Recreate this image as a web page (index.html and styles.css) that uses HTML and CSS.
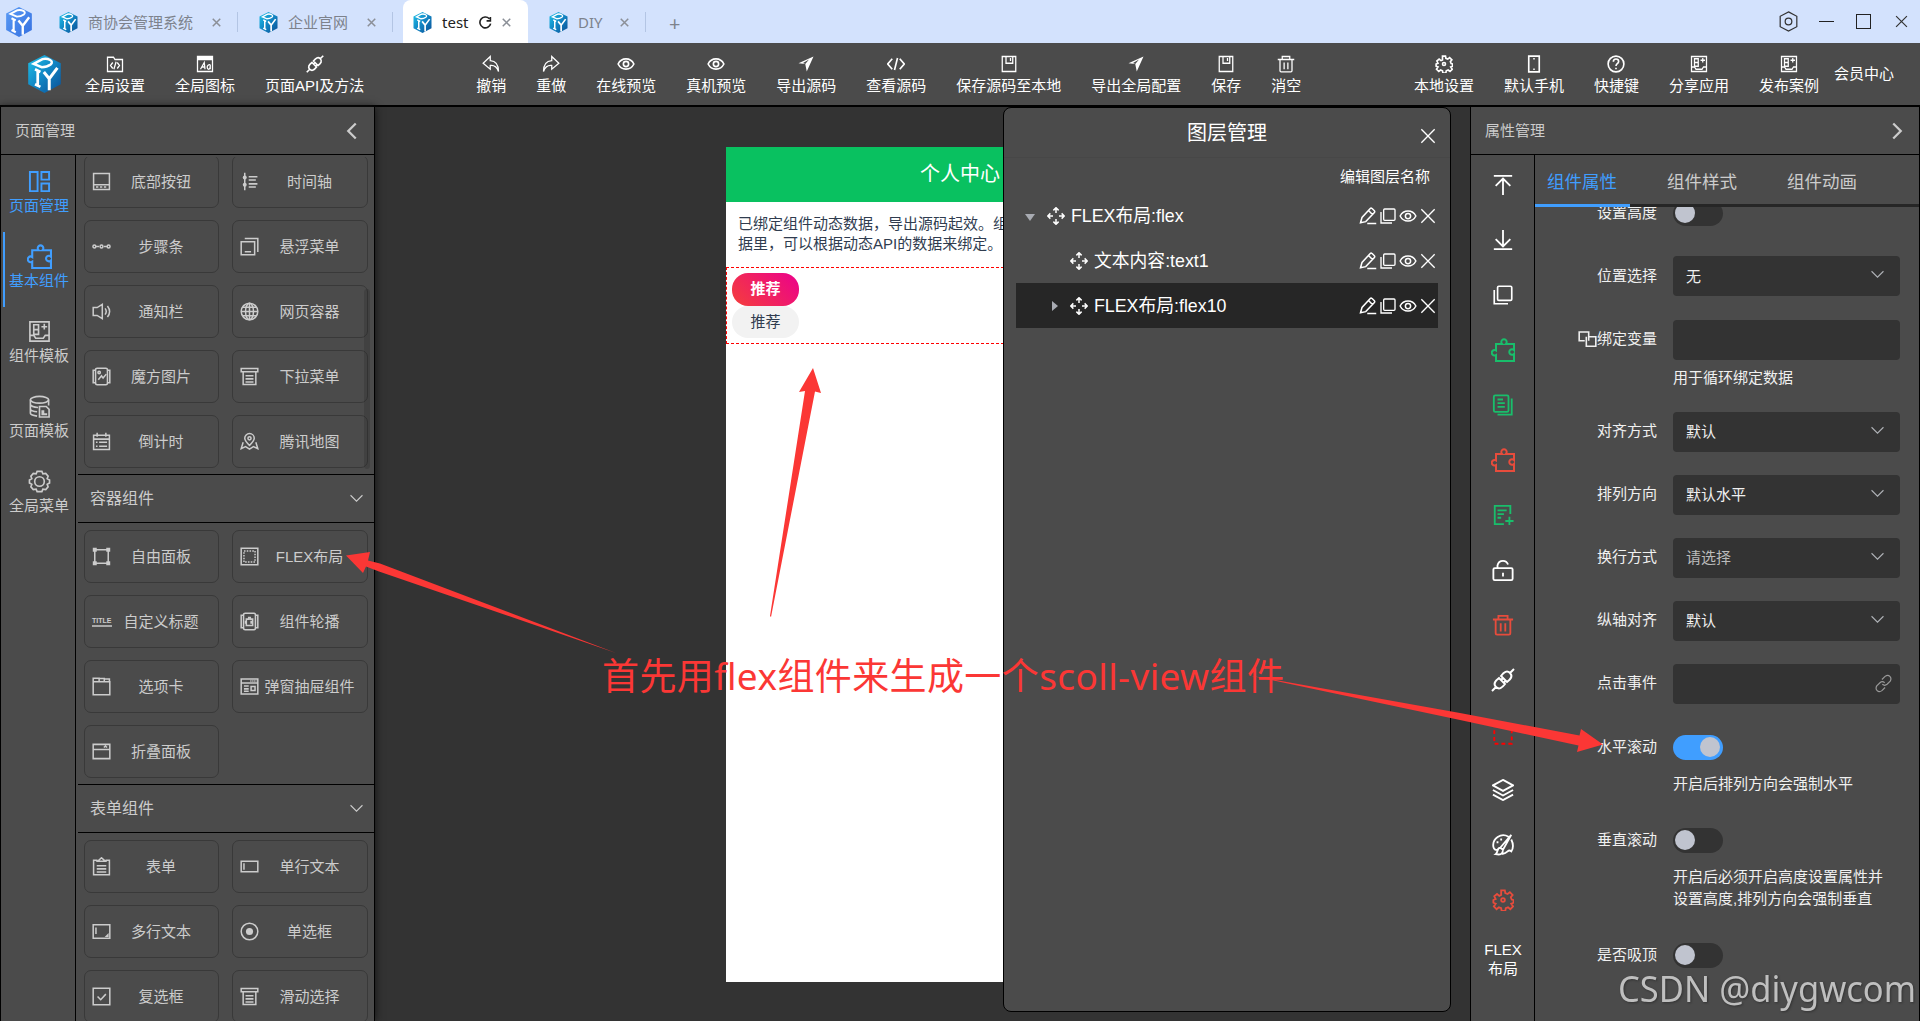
FILE: index.html
```html
<!DOCTYPE html>
<html lang="zh">
<head>
    <meta charset="UTF-8">
    <title>DIY</title>
    <link rel="stylesheet" href="styles.css">
</head>
<body>
    <!-- 图标库 -->
    <svg class="sprite">
        <defs>
            <linearGradient id="cubeFill" x1="0" y1="0" x2="1" y2="1">
                <stop offset="0" stop-color="#1fc3ea"/>
                <stop offset="0.5" stop-color="#1286c4"/>
                <stop offset="1" stop-color="#0b4f96"/>
            </linearGradient>
            <linearGradient id="cubeBlue" x1="0" y1="0" x2="1" y2="1">
                <stop offset="0" stop-color="#5b9cf5"/>
                <stop offset="1" stop-color="#3570e0"/>
            </linearGradient>
            <g id="cubeLines" fill="none" stroke="#fff">
                <path d="M4 6.500L10.500 3c4-1 9 1.500 6 4-2 1.500-4 2-6.500 2z" stroke-width="1.800"/>
                <path d="M7 11.500v11.500M5 10.500l4 2M5 21.500l4 2" stroke-width="2"/>
                <path d="M11.500 12.500l4 5 6-8M15.500 17v9" stroke-width="2.200"/>
            </g>
        </defs>
        <symbol id="logo" viewBox="0 0 24 28"><path fill="url(#cubeFill)" stroke="none" d="M12 0l12 6v15.500L12 28 0 21.500V6z"/><use href="#cubeLines"/></symbol>
        <symbol id="logo-blue" viewBox="0 0 24 28"><path fill="url(#cubeBlue)" stroke="none" d="M12 0l12 6v15.500L12 28 0 21.500V6z"/><use href="#cubeLines"/></symbol>
        <symbol id="folder-code" viewBox="0 0 24 24"><path d="M2 3h8l2 3h10v16H2zM9 10l-3 4 3 4M15 10l3 4-3 4M13.500 9l-3 10"/></symbol>
        <symbol id="font-box" viewBox="0 0 24 24"><path d="M2 2h20v20H2z"/><path class="solid" d="M2 2h20v5H2z"/><path d="M6 19l5-9 1 9M8 16h4M19 13c-5-1-5 6-2 6 2 0 2-3 2-6v6"/></symbol>
        <symbol id="plug" viewBox="0 0 24 24"><path d="M1 23l4-4M19 5l4-4M5 19c-3-3-1-6 3-9l6 6c-3 4-6 6-9 3zM10 8c3-4 6-6 9-3s1 6-3 9zM10 12l2-2M13 14.500l2-2"/></symbol>
        <symbol id="undo" viewBox="0 0 24 24"><path d="M11 2L1.500 11 11 19v-5c5-.5 9 2 11 8C22 13 18 8 11 7.500z"/></symbol>
        <symbol id="redo" viewBox="0 0 24 24"><path d="M13 2l9.500 9-9.500 8v-5c-5-.5-9 2-11 8C2 13 6 8 13 7.500z"/></symbol>
        <symbol id="eye" viewBox="0 0 24 24"><path d="M1.500 12C6 3 18 3 22.500 12 18 21 6 21 1.500 12z"/><circle cx="12" cy="12" r="3.500"/></symbol>
        <symbol id="send" viewBox="0 0 24 24"><path class="solid" d="M22 2L2 11l9 1 2 10z"/><path class="hole" d="M8 10.500l8-4.500-5 6z"/></symbol>
        <symbol id="code" viewBox="0 0 24 24"><path d="M7 5l-6 7 6 7M17 5l6 7-6 7M14 4l-4 16"/></symbol>
        <symbol id="save" viewBox="0 0 24 24"><path d="M3 2h18v20H3zM8 2v9h9V2M14 4v4"/></symbol>
        <symbol id="trash" viewBox="0 0 24 24"><path d="M1 6h22M7 6V2h10v4M4 6v15q0 1.500 1.500 1.500h13q1.500 0 1.500-1.500V6M9.500 10v9M14.500 10v9"/></symbol>
        <symbol id="gear" viewBox="0 0 24 24"><path d="M10 1.500h4l.5 3 2.500 1 2.500-2 3 3-2 2.500 1 2.500 2 .5v3l-2.500 1 2 3-3 3-2.500-2-2.500 1-.5 3h-4l-.5-3-2.500-1-2.500 2-3-3 2-3-2.500-1v-3l2.500-1-1.500-3 3-2.500 2.500 2 2-1z"/><circle cx="12" cy="12" r="2"/></symbol>
        <symbol id="gear-big" viewBox="0 0 24 24"><path d="M9.500 1.500h5l1 2.500 3-.5 2.500 3-1 2.500 2.500 1.500v3L20 15l1 2.500-2.500 3-3-.5-1 2.500h-5l-1-2.500-3 .5L3 17.500 4 15l-2.500-1.500v-3L4 9 3 6.500l2.500-3 3 .5z"/><circle cx="12" cy="12" r="5"/></symbol>
        <symbol id="phone" viewBox="0 0 24 24"><path d="M5 1.500h14v21H5z"/><path class="solid" d="M11 4h2v2h-2zM11 18h2v2h-2z"/></symbol>
        <symbol id="help" viewBox="0 0 24 24"><circle cx="12" cy="12" r="10.500"/><path d="M8.500 9c0-5 7-4.500 7-.5 0 3-3.500 3-3.500 6M12 17v2"/></symbol>
        <symbol id="template" viewBox="0 0 24 24"><path d="M2 2h20v20H2zM6 5h5v5H6zM6 10v5h5v-5M17 4v6M14 7h6M2 16h4l2 3h8l2-3h4"/></symbol>
        <symbol id="hexagon" viewBox="0 0 24 24"><path d="M12 1l9.500 5v12L12 23l-9.500-5V6z"/><circle cx="12" cy="12" r="3.800"/></symbol>
        <symbol id="reload" viewBox="0 0 24 24"><path d="M19 5a10 10 0 1 0 2.500 9M21 2v7h-7"/></symbol>
        <symbol id="x" viewBox="0 0 24 24"><path d="M2 2l20 20M22 2L2 22"/></symbol>
        <symbol id="left" viewBox="0 0 24 24"><path d="M17 2L7 12l10 10"/></symbol>
        <symbol id="right" viewBox="0 0 24 24"><path d="M7 2l10 10L7 22"/></symbol>
        <symbol id="down" viewBox="0 0 24 24"><path d="M1 6l11 11L23 6"/></symbol>
        <symbol id="layout" viewBox="0 0 24 24"><path d="M2 2h8v20H2zM14 2h8v8h-8zM14 14h8v8h-8z"/></symbol>
        <symbol id="puzzle" viewBox="0 0 24 24"><path d="M5 6h6.200a2.700 2.700 0 1 1 3.600 0H23v6.200a2.700 2.700 0 1 0 0 3.600V23H5v-6a2.700 2.700 0 1 1 0-4.500z"/></symbol>
        <symbol id="database" viewBox="0 0 24 24"><ellipse cx="12" cy="5" rx="9.500" ry="3.500"/><path d="M2.500 5v14q0 2 7 3M2.500 10q1 2.500 8 3M2.500 15q1 2 7 2.500M21.500 5v6M12 12h7l3 3v8H12z"/><path class="solid" d="M14 16h3v3h3v2h-6z"/></symbol>
        <symbol id="tabbar" viewBox="0 0 24 24"><path d="M2 2h20v20H2zM2 16h20"/><path class="solid" d="M5 18h3v2H5zM10 18h3v2h-3zM15 18h3v2h-3z"/></symbol>
        <symbol id="timeline" viewBox="0 0 24 24"><path d="M6 1v22M11 6h11M11 10h9M11 15h11M11 19h9"/><circle class="solid" cx="6" cy="7" r="2.500"/><circle class="solid" cx="6" cy="16" r="2.500"/></symbol>
        <symbol id="steps" viewBox="0 0 24 24"><path d="M5 12h4M15 12h4"/><circle cx="3" cy="12" r="1.800"/><circle cx="12" cy="12" r="1.800"/><circle cx="21" cy="12" r="1.800"/></symbol>
        <symbol id="float" viewBox="0 0 24 24"><path d="M1.500 6h17v16.500h-17zM6 2h16.500v17M6 18.500h8"/></symbol>
        <symbol id="sound" viewBox="0 0 24 24"><path d="M1.500 7h5L13 3v18l-6.500-4h-5zM16.500 8q3 4 0 8M19.500 5q5.500 7 0 14"/></symbol>
        <symbol id="globe" viewBox="0 0 24 24"><circle cx="12" cy="12" r="10.500"/><ellipse cx="12" cy="12" rx="5" ry="10.500"/><path d="M12 1.500v21M1.500 12h21M3.500 6.500h17M3.500 17.500h17"/></symbol>
        <symbol id="picture" viewBox="0 0 24 24"><rect x="4.500" y="1.500" width="15" height="21" rx="2"/><path d="M4 4H1.500v16H4M20 4h2.500v16H20M8 16l4-5 2 3 4-5"/><circle cx="9" cy="7" r="1.500"/></symbol>
        <symbol id="dropdown" viewBox="0 0 24 24"><path d="M1.500 2h21v4h-21zM4 6v16h16V6M7 11h10M7 15h10M7 19h10"/></symbol>
        <symbol id="calendar" viewBox="0 0 24 24"><path d="M2 4h20v18H2zM2 9h20M6.500 1v5M17.500 1v5M5 13h2M9 13h10M5 18h2M9 18h10"/></symbol>
        <symbol id="map" viewBox="0 0 24 24"><path d="M12 17C8 13 6 11 6 8a6 6 0 0 1 12 0c0 3-2 5-6 9zM4 13l-2.500 8 5.500-2.500 5 3 5-3 5.500 2.500L20 13"/><circle cx="12" cy="8" r="2"/></symbol>
        <symbol id="free" viewBox="0 0 24 24"><path d="M3.500 3.500h17v17h-17z"/><path class="solid" d="M1 1h5v5H1zM18 1h5v5h-5zM1 18h5v5H1zM18 18h5v5h-5z"/></symbol>
        <symbol id="flexbox" viewBox="0 0 24 24"><path d="M1.500 1.500h21v21h-21z"/><path stroke-dasharray="2 1.500" d="M5 5h14v14H5z"/></symbol>
        <symbol id="carousel" viewBox="0 0 24 24"><rect x="4.500" y="1.500" width="15" height="21" rx="2"/><path d="M4 4H1.500v16H4M20 4h2.500v16H20M8 9h3V7h2v2h3v3h-2v2h2v3H8v-3H7v-2h1z"/></symbol>
        <symbol id="tabs" viewBox="0 0 24 24"><path d="M1.500 1.500H9V6h13.500v16.500h-21zM9 2h6.500v4M15.500 2.500H22V6M1.500 6H9"/></symbol>
        <symbol id="popup" viewBox="0 0 24 24"><path d="M1.500 2.500h21v19h-21zM1.500 7.500h21M5 11.500h6M5 15h6M5 18h6M14 12h5v5h-5z"/><path stroke-dasharray="1.500 1" d="M13 5h8"/></symbol>
        <symbol id="collapse" viewBox="0 0 24 24"><path d="M1.500 3h21v18h-21zM1.500 9.500h21M15 7l2-2 2 2"/></symbol>
        <symbol id="form" viewBox="0 0 24 24"><path d="M7 4H2v18.500h20V4h-5M7 5.500L12 1l5 4.500zM6 11h12M6 15h12M6 19h12"/></symbol>
        <symbol id="input" viewBox="0 0 24 24"><path d="M1.500 5.500h21v13h-21zM5 8v8"/></symbol>
        <symbol id="textarea" viewBox="0 0 24 24"><path d="M1.500 3.500h21v17h-21zM5 7v8"/><path class="solid" d="M21 14v5h-5z"/></symbol>
        <symbol id="radio" viewBox="0 0 24 24"><circle cx="12" cy="12" r="10.500"/><circle class="solid" cx="12" cy="12" r="4.500"/></symbol>
        <symbol id="checkbox" viewBox="0 0 24 24"><path d="M1.500 1.500h21v21h-21zM7 12l4 4 6.500-7"/></symbol>
        <symbol id="move" viewBox="0 0 24 24"><path d="M12 1v7M12 16v7M1 12h7M16 12h7M8.500 4.500L12 1l3.500 3.500M8.500 19.500L12 23l3.500-3.500M4.500 8.500L1 12l3.500 3.500M19.500 8.500L23 12l-3.500 3.500"/></symbol>
        <symbol id="edit" viewBox="0 0 24 24"><path d="M2 21l2-7L15 2q1-1 2.500 0l3 3q1 1 0 2.500L9 19.500zM13 5l5 5M11 22h12"/></symbol>
        <symbol id="copy" viewBox="0 0 24 24"><rect x="5.500" y="1.500" width="17" height="17" rx="1.500"/><path d="M1.500 6v16.500H18"/></symbol>
        <symbol id="to-top" viewBox="0 0 24 24"><path d="M2 2h20M12 23V6M4 13l8-8 8 8"/></symbol>
        <symbol id="to-bottom" viewBox="0 0 24 24"><path d="M2 22h20M12 1v17M4 11l8 8 8-8"/></symbol>
        <symbol id="docs" viewBox="0 0 24 24"><rect x="2" y="1.500" width="16" height="18" rx="1.500"/><path d="M6 6h6M6 10h8M6 14h8M21.500 5v17.500H6"/></symbol>
        <symbol id="doc-add" viewBox="0 0 24 24"><path d="M20 11V2H3v20h10M6 7h10M6 11h7M6 15h4M19 14v9M14.500 18.500h9"/></symbol>
        <symbol id="unlock" viewBox="0 0 24 24"><rect x="1.500" y="10" width="21" height="13" rx="1.500"/><path d="M6 10V7q1-5 6-5 4 0 5.500 4M12 15v4"/></symbol>
        <symbol id="dashed" viewBox="0 0 24 24"><path stroke-dasharray="4.200 3.300" d="M2.500 2.500h19v19h-19z"/></symbol>
        <symbol id="layers" viewBox="0 0 24 24"><path d="M12 1l11 6-11 6L1 7zM1 12l11 6 11-6M1 17l11 6 11-6"/></symbol>
        <symbol id="palette" viewBox="0 0 24 24"><path d="M18 3C10-2 0 5 1.500 14c.5 3 3 4 5 3M21 6c3 6 2 10 0 13q-2-2-4 0t-6 3M21 1L9 15l3 2zM9 15c-4 0-2 5-5 7 5 1 8 0 8-5"/><path d="M6 8v2M10 5v2"/></symbol>
        <symbol id="link" viewBox="0 0 24 24"><path d="M10 7l4-4q3.500-2.500 6 0t.5 6l-4 4q-3 2.500-6 0M14 17l-4 4q-3.500 2.500-6 0T3.500 15l4-4q3-2.500 6 0"/></symbol>
        <symbol id="bind" viewBox="0 0 24 24"><path d="M8.500 13.500h-7v-11h12v11M14 8.500h8.500v12h-12v-12"/></symbol>
    </svg>

    <header class="tabbar">
        <svg class="app-logo"><use href="#logo-blue"/></svg>
        <div class="tab tab-1"><svg class="tab-logo"><use href="#logo"/></svg><span>商协会管理系统</span><svg class="tab-x"><use href="#x"/></svg></div>
        <div class="tab tab-2"><svg class="tab-logo"><use href="#logo"/></svg><span>企业官网</span><svg class="tab-x"><use href="#x"/></svg></div>
        <div class="tab active"><svg class="tab-logo"><use href="#logo"/></svg><span>test</span><svg class="tab-reload"><use href="#reload"/></svg><svg class="tab-x"><use href="#x"/></svg></div>
        <div class="tab tab-4"><svg class="tab-logo"><use href="#logo"/></svg><span>DIY</span><svg class="tab-x"><use href="#x"/></svg></div>
        <div class="tab-add">+</div>
        <div class="window-btns">
            <svg class="win-hex"><use href="#hexagon"/></svg>
            <i class="win-min"></i>
            <i class="win-max"></i>
            <svg class="win-x"><use href="#x"/></svg>
        </div>
    </header>

    <div class="toolbar">
        <svg class="brand"><use href="#logo"/></svg>
        <div class="tools">
            <div class="tool"><svg><use href="#folder-code"/></svg>全局设置</div>
            <div class="tool"><svg><use href="#font-box"/></svg>全局图标</div>
            <div class="tool"><svg class="bold"><use href="#plug"/></svg>页面API及方法</div>
        </div>
        <div class="tools tools-main">
            <div class="tool"><svg><use href="#undo"/></svg>撤销</div>
            <div class="tool"><svg><use href="#redo"/></svg>重做</div>
            <div class="tool"><svg class="bold"><use href="#eye"/></svg>在线预览</div>
            <div class="tool"><svg class="bold"><use href="#eye"/></svg>真机预览</div>
            <div class="tool"><svg><use href="#send"/></svg>导出源码</div>
            <div class="tool"><svg class="bold"><use href="#code"/></svg>查看源码</div>
            <div class="tool"><svg><use href="#save"/></svg>保存源码至本地</div>
            <div class="tool"><svg><use href="#send"/></svg>导出全局配置</div>
            <div class="tool"><svg><use href="#save"/></svg>保存</div>
            <div class="tool"><svg><use href="#trash"/></svg>消空</div>
        </div>
        <div class="tools tools-right">
            <div class="tool"><svg class="bold"><use href="#gear"/></svg>本地设置</div>
            <div class="tool"><svg class="bold"><use href="#phone"/></svg>默认手机</div>
            <div class="tool"><svg class="bold"><use href="#help"/></svg>快捷键</div>
            <div class="tool"><svg><use href="#template"/></svg>分享应用</div>
            <div class="tool"><svg><use href="#template"/></svg>发布案例</div>
        </div>
        <div class="member">会员中心</div>
    </div>

    <div class="main">
        <aside class="left-panel">
            <div class="panel-head"><span>页面管理</span><svg><use href="#left"/></svg></div>
            <div class="left-body">
                <nav class="side-nav">
                    <div class="nav-item blue"><svg><use href="#layout"/></svg>页面管理</div>
                    <div class="nav-item blue current"><svg class="big"><use href="#puzzle"/></svg>基本组件</div>
                    <div class="nav-item"><svg><use href="#template"/></svg>组件模板</div>
                    <div class="nav-item"><svg><use href="#database"/></svg>页面模板</div>
                    <div class="nav-item"><svg><use href="#gear-big"/></svg>全局菜单</div>
                </nav>
                <div class="components">
                    <div class="cards first">
                        <div class="card"><svg><use href="#tabbar"/></svg><span>底部按钮</span></div>
                        <div class="card"><svg><use href="#timeline"/></svg><span>时间轴</span></div>
                        <div class="card"><svg><use href="#steps"/></svg><span>步骤条</span></div>
                        <div class="card"><svg><use href="#float"/></svg><span>悬浮菜单</span></div>
                        <div class="card"><svg><use href="#sound"/></svg><span>通知栏</span></div>
                        <div class="card"><svg><use href="#globe"/></svg><span>网页容器</span></div>
                        <div class="card"><svg><use href="#picture"/></svg><span>魔方图片</span></div>
                        <div class="card"><svg><use href="#dropdown"/></svg><span>下拉菜单</span></div>
                        <div class="card"><svg><use href="#calendar"/></svg><span>倒计时</span></div>
                        <div class="card"><svg><use href="#map"/></svg><span>腾讯地图</span></div>
                    </div>
                    <div class="group-head"><span>容器组件</span><svg><use href="#down"/></svg></div>
                    <div class="cards">
                        <div class="card"><svg><use href="#free"/></svg><span>自由面板</span></div>
                        <div class="card"><svg><use href="#flexbox"/></svg><span>FLEX布局</span></div>
                        <div class="card"><b class="title-icon">TITLE</b><span>自定义标题</span></div>
                        <div class="card"><svg><use href="#carousel"/></svg><span>组件轮播</span></div>
                        <div class="card"><svg><use href="#tabs"/></svg><span>选项卡</span></div>
                        <div class="card"><svg><use href="#popup"/></svg><span>弹窗抽屉组件</span></div>
                        <div class="card"><svg><use href="#collapse"/></svg><span>折叠面板</span></div>
                    </div>
                    <div class="group-head"><span>表单组件</span><svg><use href="#down"/></svg></div>
                    <div class="cards">
                        <div class="card"><svg><use href="#form"/></svg><span>表单</span></div>
                        <div class="card"><svg><use href="#input"/></svg><span>单行文本</span></div>
                        <div class="card"><svg><use href="#textarea"/></svg><span>多行文本</span></div>
                        <div class="card"><svg><use href="#radio"/></svg><span>单选框</span></div>
                        <div class="card"><svg><use href="#checkbox"/></svg><span>复选框</span></div>
                        <div class="card"><svg><use href="#dropdown"/></svg><span>滑动选择</span></div>
                    </div>
                    <i class="scroll-thumb"></i>
                </div>
            </div>
        </aside>

        <section class="canvas">
            <div class="phone">
                <div class="phone-nav">个人中心</div>
                <p class="phone-text">已绑定组件动态数据，导出源码起效。组<br>据里，可以根据动态API的数据来绑定。</p>
                <div class="phone-flex">
                    <span class="pill pill-on">推荐</span>
                    <span class="pill">推荐</span>
                </div>
            </div>
            <!-- 图层管理弹窗 -->
            <div class="layer-dialog">
                <div class="dialog-head"><span>图层管理</span><svg><use href="#x"/></svg></div>
                <div class="dialog-tip">编辑图层名称</div>
                <div class="layer">
                    <i class="arrow-down"></i><svg class="move"><use href="#move"/></svg><span>FLEX布局:flex</span>
                    <div class="layer-ops"><svg><use href="#edit"/></svg><svg class="sm"><use href="#copy"/></svg><svg><use href="#eye"/></svg><svg class="sm"><use href="#x"/></svg></div>
                </div>
                <div class="layer child">
                    <svg class="move"><use href="#move"/></svg><span>文本内容:text1</span>
                    <div class="layer-ops"><svg><use href="#edit"/></svg><svg class="sm"><use href="#copy"/></svg><svg><use href="#eye"/></svg><svg class="sm"><use href="#x"/></svg></div>
                </div>
                <div class="layer child selected">
                    <i class="arrow-right"></i><svg class="move"><use href="#move"/></svg><span>FLEX布局:flex10</span>
                    <div class="layer-ops"><svg><use href="#edit"/></svg><svg class="sm"><use href="#copy"/></svg><svg><use href="#eye"/></svg><svg class="sm"><use href="#x"/></svg></div>
                </div>
            </div>
        </section>

        <aside class="right-panel">
            <div class="panel-head"><span>属性管理</span><svg><use href="#right"/></svg></div>
            <div class="right-body">
                <div class="quick">
                    <div><svg><use href="#to-top"/></svg></div>
                    <div><svg><use href="#to-bottom"/></svg></div>
                    <div><svg class="sm"><use href="#copy"/></svg></div>
                    <div class="green"><svg class="lg"><use href="#puzzle"/></svg></div>
                    <div class="green"><svg><use href="#docs"/></svg></div>
                    <div class="red"><svg class="lg"><use href="#puzzle"/></svg></div>
                    <div class="green"><svg><use href="#doc-add"/></svg></div>
                    <div><svg><use href="#unlock"/></svg></div>
                    <div class="red"><svg><use href="#trash"/></svg></div>
                    <div><svg class="lg"><use href="#plug"/></svg></div>
                    <div class="pure-red"><svg><use href="#dashed"/></svg></div>
                    <div><svg><use href="#layers"/></svg></div>
                    <div><svg><use href="#palette"/></svg></div>
                    <div class="red"><svg><use href="#gear"/></svg></div>
                    <p>FLEX<br>布局</p>
                </div>
                <div class="props">
                    <div class="prop-tabs">
                        <span class="on">组件属性</span>
                        <span>组件样式</span>
                        <span>组件动画</span>
                    </div>
                    <div class="form">
                        <div class="row row-first"><label>设置高度</label><i class="switch"></i></div>
                        <div class="row"><label>位置选择</label><div class="field">无<svg><use href="#down"/></svg></div></div>
                        <div class="row"><label><svg><use href="#bind"/></svg>绑定变量</label><div class="field"></div><p>用于循环绑定数据</p></div>
                        <div class="row"><label>对齐方式</label><div class="field">默认<svg><use href="#down"/></svg></div></div>
                        <div class="row"><label>排列方向</label><div class="field">默认水平<svg><use href="#down"/></svg></div></div>
                        <div class="row"><label>换行方式</label><div class="field placeholder">请选择<svg><use href="#down"/></svg></div></div>
                        <div class="row"><label>纵轴对齐</label><div class="field">默认<svg><use href="#down"/></svg></div></div>
                        <div class="row"><label>点击事件</label><div class="field"><svg class="link"><use href="#link"/></svg></div></div>
                        <div class="row"><label>水平滚动</label><i class="switch checked"></i><p>开启后排列方向会强制水平</p></div>
                        <div class="row"><label>垂直滚动</label><i class="switch"></i><p>开启后必须开启高度设置属性并<br>设置高度,排列方向会强制垂直</p></div>
                        <div class="row"><label>是否吸顶</label><i class="switch"></i></div>
                    </div>
                </div>
            </div>
        </aside>
    </div>

    <!-- 标注 -->
    <svg class="notes" viewBox="0 0 1920 1021">
        <path d="M346 555.500l24-3.500-2 8.500 12 3L616 653l-237-81.500-13-5-3 6.500z"/>
        <path d="M813 368l8 25-6-1.500L771 617l-1-1 35-225-6 1z"/>
        <path d="M1247 675l213 38 119.500 22.500L1581 729l22 15.500-26 7.500 1.500-6.500L1460 720z"/>
        <text x="602" y="689.500" font-size="37" textLength="682">首先用flex组件来生成一个scoll-view组件</text>
    </svg>
    <svg class="watermark" viewBox="0 0 310 60"><text x="8" y="41" font-size="36" textLength="298" lengthAdjust="spacingAndGlyphs">CSDN @diygwcom</text></svg>
</body>
</html>
```

FILE: styles.css
```css
* {
    box-sizing: border-box;
}

body {
    margin: 0;
    width: 1920px;
    height: 1021px;
    overflow: hidden;
    display: flex;
    flex-direction: column;
    position: relative;
    background: #4b4b4b;
    color: #fff;
    font: 15px/20px "Liberation Sans", "Noto Sans CJK SC", sans-serif;
}

svg {
    fill: none;
    stroke: currentColor;
    stroke-width: 1.7;
    flex: none;
    display: block;
}

.sprite {
    position: absolute;
    width: 0;
    height: 0;
}

.solid {
    fill: currentColor;
    stroke: none;
}

.hole {
    fill: #4b4b4b;
    stroke: none;
}

p {
    margin: 0;
}

/* 顶部标签 */
.tabbar {
    height: 43px;
    flex: none;
    display: flex;
    align-items: center;
    background: #d3e2fd;
    color: #7d828c;
    font-family: "Noto Sans", "Noto Sans CJK SC", sans-serif;
    padding-left: 6px;
}

.app-logo {
    width: 26px;
    height: 30px;
    margin-right: 13px;
}

.tab {
    height: 43px;
    display: flex;
    align-items: center;
    position: relative;
    padding: 2px 17px 0 14px;
}

.tab span {
    margin-top: -1px;
}

.tab::after {
    content: "";
    position: absolute;
    right: 0;
    top: 12px;
    width: 1px;
    height: 20px;
    background: #b3c5e4;
}

.tab-1 {
    width: 193px;
}

.tab-2 {
    width: 155px;
    padding-left: 21px;
}

.tab.active {
    width: 125px;
    margin-left: 10px;
    padding: 2px 17px 0 10px;
    background: #fff;
    color: #222;
    border-radius: 8px 8px 0 0;
}

.tab.active::after {
    display: none;
}

.tab-4 {
    width: 118px;
    padding-left: 21px;
}

.tab-logo {
    width: 19px;
    height: 21px;
    margin-right: 10px;
}

.tab-x {
    width: 9px;
    height: 9px;
    margin-left: auto;
    stroke-width: 4;
    color: #8b8f97;
}

.tab-reload {
    width: 13px;
    height: 13px;
    margin-left: 11px;
    stroke-width: 3;
}

.tab-add {
    margin-left: 23px;
    padding-top: 4px;
    font-size: 20px;
}

.window-btns {
    display: flex;
    align-items: center;
    margin-left: auto;
    padding: 0 12px 0 0;
    color: #333;
}

.win-hex {
    width: 21px;
    height: 21px;
    margin-right: 20px;
    stroke-width: 1.4;
}

.win-min {
    width: 15px;
    height: 1px;
    background: #222;
    margin-right: 22px;
}

.win-max {
    width: 15px;
    height: 15px;
    border: 1px solid #222;
    margin-right: 24px;
}

.win-x {
    width: 13px;
    height: 13px;
    stroke-width: 2.2;
}

/* 工具栏 */
.toolbar {
    height: 64px;
    flex: none;
    display: flex;
    align-items: center;
    border-bottom: 2px solid #000;
    background: #4b4b4b;
}

.brand {
    width: 37px;
    height: 38px;
    margin: 0 5px 0 26px;
}

.tools {
    display: flex;
    padding-left: 2px;
}

.tools-main {
    margin-left: 78px;
    padding-left: 4px;
}

.tools-right {
    margin-left: auto;
}

.tool {
    display: flex;
    flex-direction: column;
    align-items: center;
    padding: 3px 15px 0;
    white-space: nowrap;
}

.tool svg {
    width: 18px;
    height: 18px;
    margin-bottom: 3px;
}

.tool .bold {
    stroke-width: 2.2;
}

.member {
    width: 86px;
    white-space: nowrap;
}

/* 主体 */
.main {
    flex: 1;
    min-height: 0;
    display: flex;
}

.left-panel {
    width: 375px;
    flex: none;
    display: flex;
    flex-direction: column;
    border-left: 1px solid #000;
    border-right: 1px solid #000;
    color: #ccc;
    position: relative;
    z-index: 1;
    box-shadow: 0 0 8px #111;
    background: #4b4b4b;
}

.panel-head {
    height: 48px;
    flex: none;
    display: flex;
    align-items: center;
    justify-content: space-between;
    padding: 1px 13px 0 14px;
    border-bottom: 1px solid #000;
    color: #ccc;
}

.panel-head svg {
    width: 18px;
    height: 18px;
    stroke-width: 3;
}

.left-body {
    flex: 1;
    min-height: 0;
    display: flex;
}

.side-nav {
    width: 75px;
    flex: none;
    border-right: 1px solid #000;
    padding-top: 2px;
}

.nav-item {
    height: 75px;
    display: flex;
    flex-direction: column;
    align-items: center;
    padding: 13px 2px 0 0;
    margin-left: 2px;
    border-left: 2px solid transparent;
}

.nav-item svg {
    width: 23px;
    height: 23px;
    margin-bottom: 3px;
}

.nav-item .big {
    width: 25px;
    height: 25px;
    margin: -1px 0 2px;
    stroke-width: 2;
}

.blue {
    color: #409eff;
}

.blue svg {
    stroke-width: 2;
}

.nav-item.current {
    border-left-color: #409eff;
}

.components {
    flex: 1;
    margin: 2px 0 0 2px;
    overflow: hidden;
    position: relative;
}

.cards {
    display: grid;
    grid-template-columns: 135px 136px;
    grid-auto-rows: 53px;
    gap: 12px 13px;
    padding: 7px 6px 6px;
}

.cards.first {
    padding-top: 0;
    margin-top: -2px;
}

.card {
    display: flex;
    align-items: center;
    border: 1px solid #393939;
    border-radius: 7px;
    padding: 0 7px;
}

.card svg {
    width: 19px;
    height: 19px;
    stroke-width: 1.9;
}

.card span {
    flex: 1;
    text-align: center;
    white-space: nowrap;
}

.title-icon {
    width: 20px;
    height: 11px;
    margin-right: -1px;
    border-bottom: 2px solid #aaa;
    font-size: 7px;
    line-height: 9px;
}

.group-head {
    height: 49px;
    display: flex;
    align-items: center;
    justify-content: space-between;
    border-top: 1px solid #000;
    border-bottom: 1px solid #000;
    padding: 0 11px 0 12px;
    font-size: 16px;
}

.group-head svg {
    width: 13px;
    height: 13px;
    stroke-width: 2;
}

.scroll-thumb {
    position: absolute;
    right: 4px;
    top: 132px;
    width: 6px;
    height: 180px;
    border-radius: 3px;
    background: rgba(0, 0, 0, 0.12);
}

/* 画布 */
.canvas {
    flex: 1;
    position: relative;
    background: #333;
    overflow: hidden;
    padding: 40px 0 0 351px;
}

.phone {
    width: 468px;
    height: 835px;
    background: #fff;
    color: #303c4f;
}

.phone-nav {
    height: 55px;
    background: #09c160;
    color: #fff;
    font-size: 20px;
    line-height: 54px;
    text-align: center;
}

.phone-text {
    padding: 12px 12px 13px;
    white-space: nowrap;
}

.phone-flex {
    height: 77px;
    border: 1px dashed #f00;
    padding: 5px;
    display: flex;
    flex-direction: column;
}

.pill {
    width: 67px;
    height: 32px;
    border-radius: 16px;
    background: #f2f2f2;
    line-height: 32px;
    text-align: center;
}

.pill-on {
    height: 33px;
    background: linear-gradient(45deg, #f43f3b, #ec008c);
    color: #fff;
    font-weight: bold;
}

.layer-dialog {
    position: absolute;
    left: 628px;
    top: 0;
    width: 448px;
    height: 905px;
    border: 1px solid #000;
    border-radius: 8px;
    background: #4b4b4b;
    padding: 0 12px;
}

.dialog-head {
    height: 50px;
    margin: 0 -12px;
    border-bottom: 1px solid #474747;
    font-size: 20px;
    line-height: 51px;
    text-align: center;
    position: relative;
}

.dialog-head svg {
    position: absolute;
    right: 14px;
    top: 20px;
    width: 16px;
    height: 16px;
    stroke-width: 2;
}

.dialog-tip {
    text-align: right;
    padding: 9px 8px 0 0;
    height: 35px;
}

.layer {
    height: 45px;
    display: flex;
    align-items: center;
    padding: 0 2px 0 9px;
    font-size: 17.8px;
}

.child {
    padding-left: 54px;
}

.selected {
    background: #262626;
    padding-left: 36px;
}

.arrow-down {
    border: 5px solid transparent;
    border-top: 7px solid #a8abb2;
    border-bottom: 0;
    margin: 3px 12px 0 0;
}

.arrow-right {
    border: 5px solid transparent;
    border-left: 6px solid #a8abb2;
    border-right: 0;
    margin-right: 12px;
}

.move {
    width: 18px;
    height: 18px;
    margin-right: 6px;
    stroke-width: 2;
}

.layer-ops {
    display: flex;
    align-items: center;
    gap: 3px;
    margin-left: auto;
}

.layer-ops svg {
    width: 18px;
    height: 18px;
    stroke-width: 2;
}

.layer-ops .sm {
    width: 16px;
    height: 16px;
}

/* 属性面板 */
.right-panel {
    width: 450px;
    flex: none;
    display: flex;
    flex-direction: column;
    border-left: 1px solid #000;
    border-right: 1px solid #000;
    background: #4b4b4b;
}

.right-body {
    flex: 1;
    min-height: 0;
    display: flex;
}

.quick {
    width: 64px;
    flex: none;
    border-right: 1px solid #000;
    padding: 2px 0 0 1px;
}

.quick div {
    height: 55px;
    display: flex;
    align-items: center;
    justify-content: center;
}

.quick svg {
    width: 22px;
    height: 22px;
    stroke-width: 2;
}

.quick .lg {
    width: 24px;
    height: 24px;
}

.quick .sm {
    width: 20px;
    height: 20px;
}

.quick p {
    text-align: center;
    padding-top: 13px;
    line-height: 19px;
}

.green {
    color: #19be6b;
}

.red {
    color: #e74c3c;
}

.pure-red {
    color: #f00;
}

.props {
    flex: 1;
    display: flex;
    flex-direction: column;
    min-height: 0;
}

.prop-tabs {
    height: 52px;
    flex: none;
    display: flex;
    gap: 25px;
    border-bottom: 3px solid #262626;
    font-size: 17.5px;
    line-height: 54px;
    color: #ccc;
}

.prop-tabs span {
    width: 95px;
    height: 52px;
    padding-left: 12px;
    white-space: nowrap;
}

.prop-tabs .on {
    color: #409eff;
    border-bottom: 3px solid #409eff;
}

.form {
    flex: 1;
    overflow: hidden;
    color: #f0f0f0;
}

.row {
    display: grid;
    grid-template-columns: 122px 227px;
    grid-template-rows: 40px;
    column-gap: 16px;
    align-items: center;
    margin-bottom: 23.1px;
}

.row-first {
    margin-top: -13.7px;
}

.row label {
    display: flex;
    justify-content: flex-end;
    align-items: center;
    padding-bottom: 1px;
}

.row label svg {
    width: 19px;
    height: 19px;
    stroke-width: 2;
}

.row p {
    grid-column: 2;
    padding: 7px 0 0;
    line-height: 22px;
    white-space: nowrap;
}

.row .switch ~ p {
    padding: 6px 0 2px;
}

.field {
    height: 40px;
    border-radius: 4px;
    background: #333;
    display: flex;
    align-items: center;
    justify-content: space-between;
    padding: 1px 16px 0 13px;
}

.field svg {
    width: 13px;
    height: 13px;
    stroke-width: 2;
    color: #b0b3b8;
    margin: -4px 0 0 auto;
}

.field .link {
    width: 19px;
    height: 19px;
    margin: -2px -9px 0 auto;
    stroke-width: 1.5;
    color: #999;
}

.placeholder {
    color: #bbb;
}

.switch {
    width: 50px;
    height: 25px;
    border-radius: 13px;
    background: #333;
    display: flex;
    align-items: center;
    padding: 0 2px;
}

.switch::before {
    content: "";
    width: 20px;
    height: 20px;
    border-radius: 50%;
    background: #c0c4cf;
}

.switch.checked {
    background: #409eff;
    justify-content: flex-end;
    padding-right: 3px;
}

/* 红色标注 */
.notes {
    position: absolute;
    left: 0;
    top: 0;
    width: 1920px;
    height: 1021px;
    z-index: 5;
    fill: #fb3735;
    stroke: none;
    font-family: "Noto Sans", "Noto Sans CJK SC", sans-serif;
}

.watermark {
    position: absolute;
    right: 0;
    bottom: 0;
    width: 310px;
    height: 60px;
    z-index: 6;
    fill: #bfbfbf;
    stroke: none;
    font-family: "Noto Sans", sans-serif;
    filter: drop-shadow(1px 1px 1px #333);
}
```
